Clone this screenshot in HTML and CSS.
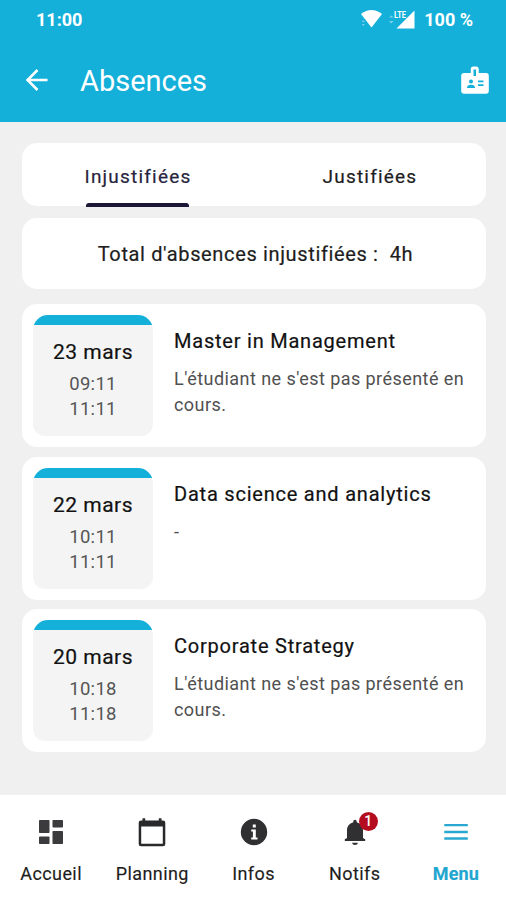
FILE: index.html
```html
<!DOCTYPE html>
<html lang="fr">
<head>
<meta charset="utf-8">
<title>Absences</title>
<link rel="stylesheet" href="styles.css">
</head>
<body>
<div class="app">
  <header class="header">
    <div class="status">
      <span class="clock">11:00</span>
      <svg class="wifi" width="22" height="18" viewBox="0 0 22 18"><path fill="#fff" d="M0 4Q10.500-4 21 4L10.500 17.500Z"/><path fill="#7fd0ea" d="M2 10l2 2H1zM1 14h3l-2 2z"/></svg>
      <svg class="signal" width="28" height="20" viewBox="0 0 28 20"><path fill="#fff" d="M26.500 1.500V19.500H8.500Z"/><path fill="#7fd0ea" d="M1 8.500l2.500-2 2 2zM1 12h4.500l-2.200 2.500z"/><text class="lte" x="6" y="9" textLength="12" lengthAdjust="spacingAndGlyphs">LTE</text></svg>
      <span class="battery">100 %</span>
    </div>
    <div class="toolbar">
      <svg class="back" width="24" height="24" viewBox="0 0 24 24"><path fill="none" stroke="#fff" stroke-width="2.500" d="M22.500 12H3M12.500 2L2.500 12l10 10"/></svg>
      <h1 class="title">Absences</h1>
      <svg class="badge-card" width="28" height="28" viewBox="0 0 28 28"><path fill="#fff" fill-rule="evenodd" d="M3 7H9.800V3Q9.800.5 12.300.5H15.200Q17.700.5 17.700 3V7H25Q27.800 7 27.800 9.800V25Q27.800 27.800 25 27.800H3Q.2 27.800.2 25V9.800Q.2 7 3 7ZM12.500 3.400V10H15V3.400Z"/><g fill="#14b0da"><circle cx="10" cy="15.500" r="2"/><path d="M6 22q0-3.300 4-3.300t4 3.300zM17 14.500h5.500v1.800H17zM17 18.200h5.500V20H17z"/></g></svg>
    </div>
  </header>

  <main class="content">
    <nav class="card tabs">
      <a class="tab active"><span class="tab-text">Injustifiées</span></a>
      <a class="tab"><span class="tab-text">Justifiées</span></a>
    </nav>
    <section class="card total"><span class="total-label">Total d'absences injustifiées :&nbsp; 4h</span></section>

    <article class="card absence">
      <div class="slot"><div class="date">23 mars</div><div class="time">09:11</div><div class="time">11:11</div></div>
      <div class="details"><h2 class="course">Master in Management</h2><p class="reason">L'étudiant ne s'est pas présenté en<br>cours.</p></div>
    </article>
    <article class="card absence">
      <div class="slot"><div class="date">22 mars</div><div class="time">10:11</div><div class="time">11:11</div></div>
      <div class="details"><h2 class="course">Data science and analytics</h2><p class="reason">-</p></div>
    </article>
    <article class="card absence">
      <div class="slot"><div class="date">20 mars</div><div class="time">10:18</div><div class="time">11:18</div></div>
      <div class="details"><h2 class="course">Corporate Strategy</h2><p class="reason">L'étudiant ne s'est pas présenté en<br>cours.</p></div>
    </article>
  </main>

  <footer class="bottom">
    <a class="item"><svg class="icon" width="32" height="32" viewBox="0 0 32 32"><g fill="#3b3b3e"><rect x="4" y="4" width="10.500" height="13" rx=".8"/><rect x="4" y="20.500" width="10.500" height="7.500" rx=".8"/><rect x="17.500" y="4" width="10.500" height="7.500" rx=".8"/><rect x="17.500" y="15" width="10.500" height="13" rx=".8"/></g></svg><span class="label">Accueil</span></a>
    <a class="item"><svg class="icon" width="32" height="32" viewBox="0 0 32 32"><path fill="#29292c" fill-rule="evenodd" d="M6.500 2.200h2.700v2.300h13.600V2.200h2.700v2.300H27q2.300 0 2.300 2.300V28q0 2.300-2.300 2.300H5Q2.700 30.300 2.700 28V6.800Q2.700 4.500 5 4.500h1.500zM5.200 10.500V27.800H26.800V10.500z"/></svg><span class="label">Planning</span></a>
    <a class="item"><svg class="icon" width="32" height="32" viewBox="0 0 32 32"><circle cx="16" cy="16" r="13.200" fill="#303033"/><path fill="#fff" d="M14.800 8.500h3v3h-3zM13.200 13.600h4.600v8h1.700v2h-6.300v-2h1.700v-6h-1.700z"/></svg><span class="label">Infos</span></a>
    <a class="item"><span class="bell"><svg class="icon" width="32" height="32" viewBox="0 0 32 32"><path fill="#303033" d="M14.300 5.500Q14.300 3.700 16 3.700t1.700 1.800v.8Q24 8 24 14.500V22l2.200 1.300v1.800H5.800v-1.800L8 22v-7.500Q8 8 14.300 6.300zM13 26.700h6Q18.500 29 16 29t-3-2.300z"/></svg><span class="count">1</span></span><span class="label">Notifs</span></a>
    <a class="item current"><svg class="icon" width="32" height="32" viewBox="0 0 32 32"><path fill="none" stroke="#28a8d0" stroke-width="2.300" d="M4.300 9.200h23.500M4.300 16h23.500M4.300 22.500h23.500"/></svg><span class="label">Menu</span></a>
  </footer>
</div>
</body>
</html>
```
FILE: styles.css
```css
* { box-sizing: border-box; }
body { margin: 0; font-family: Roboto, "Liberation Sans", sans-serif; color: #1d1d20; }
h1, h2, p { margin: 0; font-weight: 400; }
.app { width: 506px; height: 900px; display: flex; flex-direction: column; background: #f0f0f0; overflow: hidden; }
.header { height: 122px; background: #14b0da; color: #fff; }
.status { height: 38px; padding: 0 33px 0 36px; display: flex; align-items: center; font-size: 18px; font-weight: 700; white-space: nowrap; }
.clock { margin-right: auto; }
.wifi { margin-right: 5px; }
.signal { margin-right: 8px; }
.lte { font-size: 9.500px; font-weight: 700; fill: #fff; }
.toolbar { height: 84px; display: flex; align-items: center; padding: 0 17px 0 25px; }
.title { margin: 2px auto 0 31px; font-size: 29px; line-height: 36px; }
.back { margin-top: 0; }
.badge-card { margin-top: 0; }
.content { flex: 1; padding: 21px 20px 0 22px; display: flex; flex-direction: column; }
.card { background: #fff; border-radius: 15px; }
.tabs { height: 63px; display: flex; }
.tab { flex: 1; display: flex; justify-content: center; align-items: center; padding-top: 3px; font-size: 19px; letter-spacing: 1.2px; position: relative; -webkit-text-stroke: .2px; }
.tab.active { color: #27243d; }
.tab.active::after { content: ""; position: absolute; left: 64px; bottom: -1px; width: 103px; height: 4px; border-radius: 3px 3px 0 0; background: #1c1637; }
.total { height: 71px; margin: 12px 0 15px; display: flex; align-items: center; justify-content: center; padding: 1px 0 0 3px; font-size: 20px; letter-spacing: .64px; -webkit-text-stroke: .2px; }
.absence { height: 143px; margin-bottom: 9.500px; padding: 11px; display: flex; }
.slot { width: 120px; height: 121px; flex: none; border-radius: 15px 15px 12px 12px; background: linear-gradient(#14b0da 10px, #f4f4f4 10px); text-align: center; padding-top: 23px; }
.date { font-size: 21px; line-height: 28px; letter-spacing: .5px; color: #111; -webkit-text-stroke: .2px; }
.time { font-size: 18.500px; line-height: 25px; letter-spacing: .3px; color: #555; }
.date + .time { margin-top: 6px; }
.details { padding: 12px 0 0 21px; white-space: nowrap; }
.course { font-size: 20px; line-height: 28px; letter-spacing: .78px; color: #111; -webkit-text-stroke: .2px #111; }
.reason { margin-top: 11px; font-size: 18px; line-height: 26px; letter-spacing: .44px; color: #505050; }
.bottom { height: 105px; background: #fff; display: flex; }
.item { flex: 1; display: flex; flex-direction: column; align-items: center; padding: 21px 0 0 1px; }
.icon { display: block; }
.label { margin-top: 15px; font-size: 18px; line-height: 22px; letter-spacing: .4px; -webkit-text-stroke: .15px; }
.bell { position: relative; }
.count { position: absolute; left: 20px; top: -4px; width: 19px; height: 19px; border-radius: 50%; background: #b50d20; color: #fff; font-size: 14px; font-weight: 500; line-height: 19px; text-align: center; }
.current { color: #22a6d0; font-weight: 700; }
.current .label { letter-spacing: .2px; }
```
